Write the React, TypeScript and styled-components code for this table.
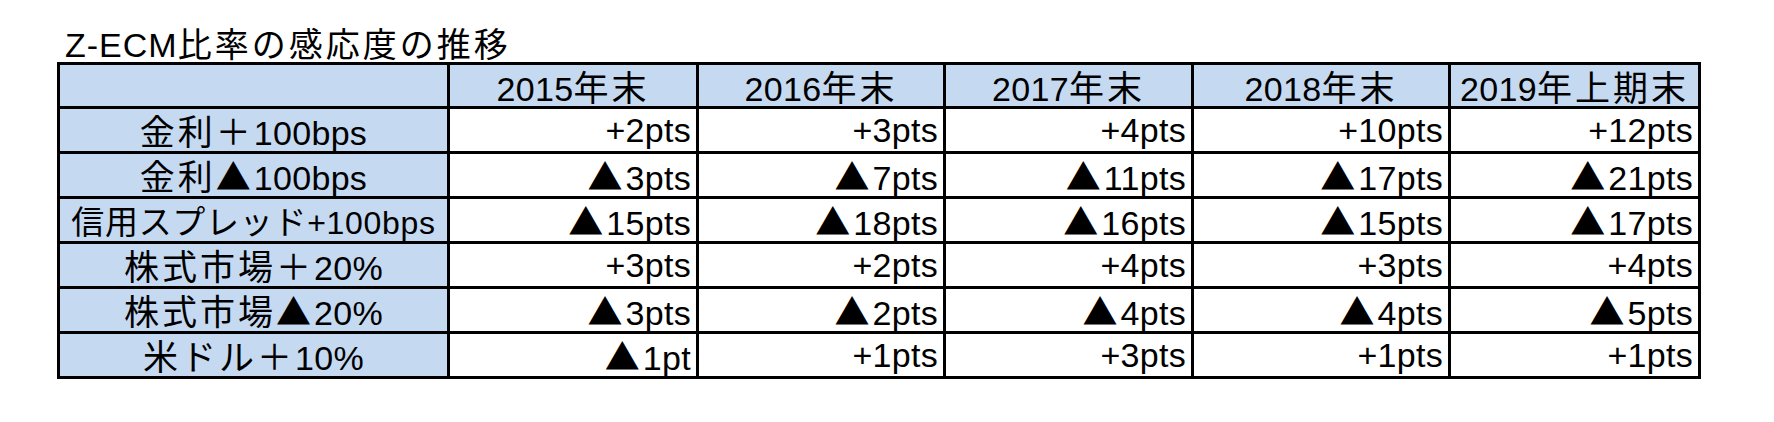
import React from "react";
import styled, { createGlobalStyle } from "styled-components";

const GlobalStyle = createGlobalStyle`
  html, body {
    margin: 0;
    padding: 0;
    background: #ffffff;
  }
  body {
    font-family: "Liberation Sans", "Noto Sans CJK JP", sans-serif;
    color: #000000;
  }
`;

const columns = ["2015年末", "2016年末", "2017年末", "2018年末", "2019年上期末"];

const rows: { label: string; fit?: boolean; values: string[] }[] = [
  { label: "金利＋100bps", values: ["+2pts", "+3pts", "+4pts", "+10pts", "+12pts"] },
  { label: "金利▲100bps", values: ["▲3pts", "▲7pts", "▲11pts", "▲17pts", "▲21pts"] },
  {
    label: "信用スプレッド+100bps",
    fit: true,
    values: ["▲15pts", "▲18pts", "▲16pts", "▲15pts", "▲17pts"],
  },
  { label: "株式市場＋20%", values: ["+3pts", "+2pts", "+4pts", "+3pts", "+4pts"] },
  { label: "株式市場▲20%", values: ["▲3pts", "▲2pts", "▲4pts", "▲4pts", "▲5pts"] },
  { label: "米ドル＋10%", values: ["▲1pt", "+1pts", "+3pts", "+1pts", "+1pts"] },
];

// split a string into ascii runs and full-width runs, so each gets its own size
const Runs = ({ text, fit }: { text: string; fit?: boolean }) => {
  const parts = text.match(/[\x00-\x7f]+|[^\x00-\x7f]+/g) ?? [];
  return (
    <>
      {parts.map((part, idx) =>
        /^[\x00-\x7f]/.test(part) ? (
          <Latin key={idx} $fit={fit}>
            {part}
          </Latin>
        ) : (
          <Wide key={idx} $fit={fit}>
            {part}
          </Wide>
        )
      )}
    </>
  );
};

const App = () => {
  return (
    <Page>
      <GlobalStyle />
      <Title>
        <TitleLatin>Z-ECM</TitleLatin>
        <TitleWide>比率の感応度の推移</TitleWide>
      </Title>
      <Grid>
        <HeadCell />
        {columns.map((col) => (
          <HeadCell key={col}>
            <Runs text={col} />
          </HeadCell>
        ))}
        {rows.map((row) => (
          <React.Fragment key={row.label}>
            <LabelCell>
              <Runs text={row.label} fit={row.fit} />
            </LabelCell>
            {row.values.map((v, idx) => (
              <ValueCell key={row.label + idx}>
                <Runs text={v} />
              </ValueCell>
            ))}
          </React.Fragment>
        ))}
      </Grid>
    </Page>
  );
};

const Page = styled.div`
  padding: 24px 0 0 57px;
  width: 1717px;
  height: 398px;
`;

const Title = styled.div`
  display: flex;
  align-items: baseline;
  height: 38px;
  padding-left: 8px;
  white-space: nowrap;
  line-height: 38px;
`;

const TitleLatin = styled.span`
  font-family: "Liberation Sans", sans-serif;
  font-size: 34px;
  letter-spacing: 1px;
`;

const TitleWide = styled.span`
  font-family: "Noto Sans CJK JP", sans-serif;
  font-size: 34px;
  letter-spacing: 3px;
`;

const Grid = styled.div`
  display: grid;
  grid-template-columns: 387px 246px 244px 245px 254px 247px;
  grid-template-rows: 41px repeat(6, 42px);
  gap: 3px;
  border: 3px solid #000;
  background: #000;
  width: max-content;
`;

const Cell = styled.div`
  display: flex;
  align-items: baseline;
  padding-top: 1px;
  line-height: 40px;
  white-space: nowrap;
`;

const HeadCell = styled(Cell)`
  background: #c5d9f1;
  justify-content: center;
`;

const LabelCell = styled(Cell)`
  background: #c5d9f1;
  justify-content: center;
`;

const ValueCell = styled(Cell)`
  background: #ffffff;
  justify-content: flex-end;
  padding-right: 5px;
`;

const Latin = styled.span<{ $fit?: boolean }>`
  font-family: "Liberation Sans", sans-serif;
  font-size: ${(p) => (p.$fit ? "32px" : "34px")};
  letter-spacing: ${(p) => (p.$fit ? "0.7px" : "0.3px")};
`;

const Wide = styled.span<{ $fit?: boolean }>`
  font-family: "Noto Sans CJK JP", sans-serif;
  font-size: ${(p) => (p.$fit ? "33px" : "35px")};
  letter-spacing: ${(p) => (p.$fit ? "0.7px" : "3px")};
`;

export default App;
